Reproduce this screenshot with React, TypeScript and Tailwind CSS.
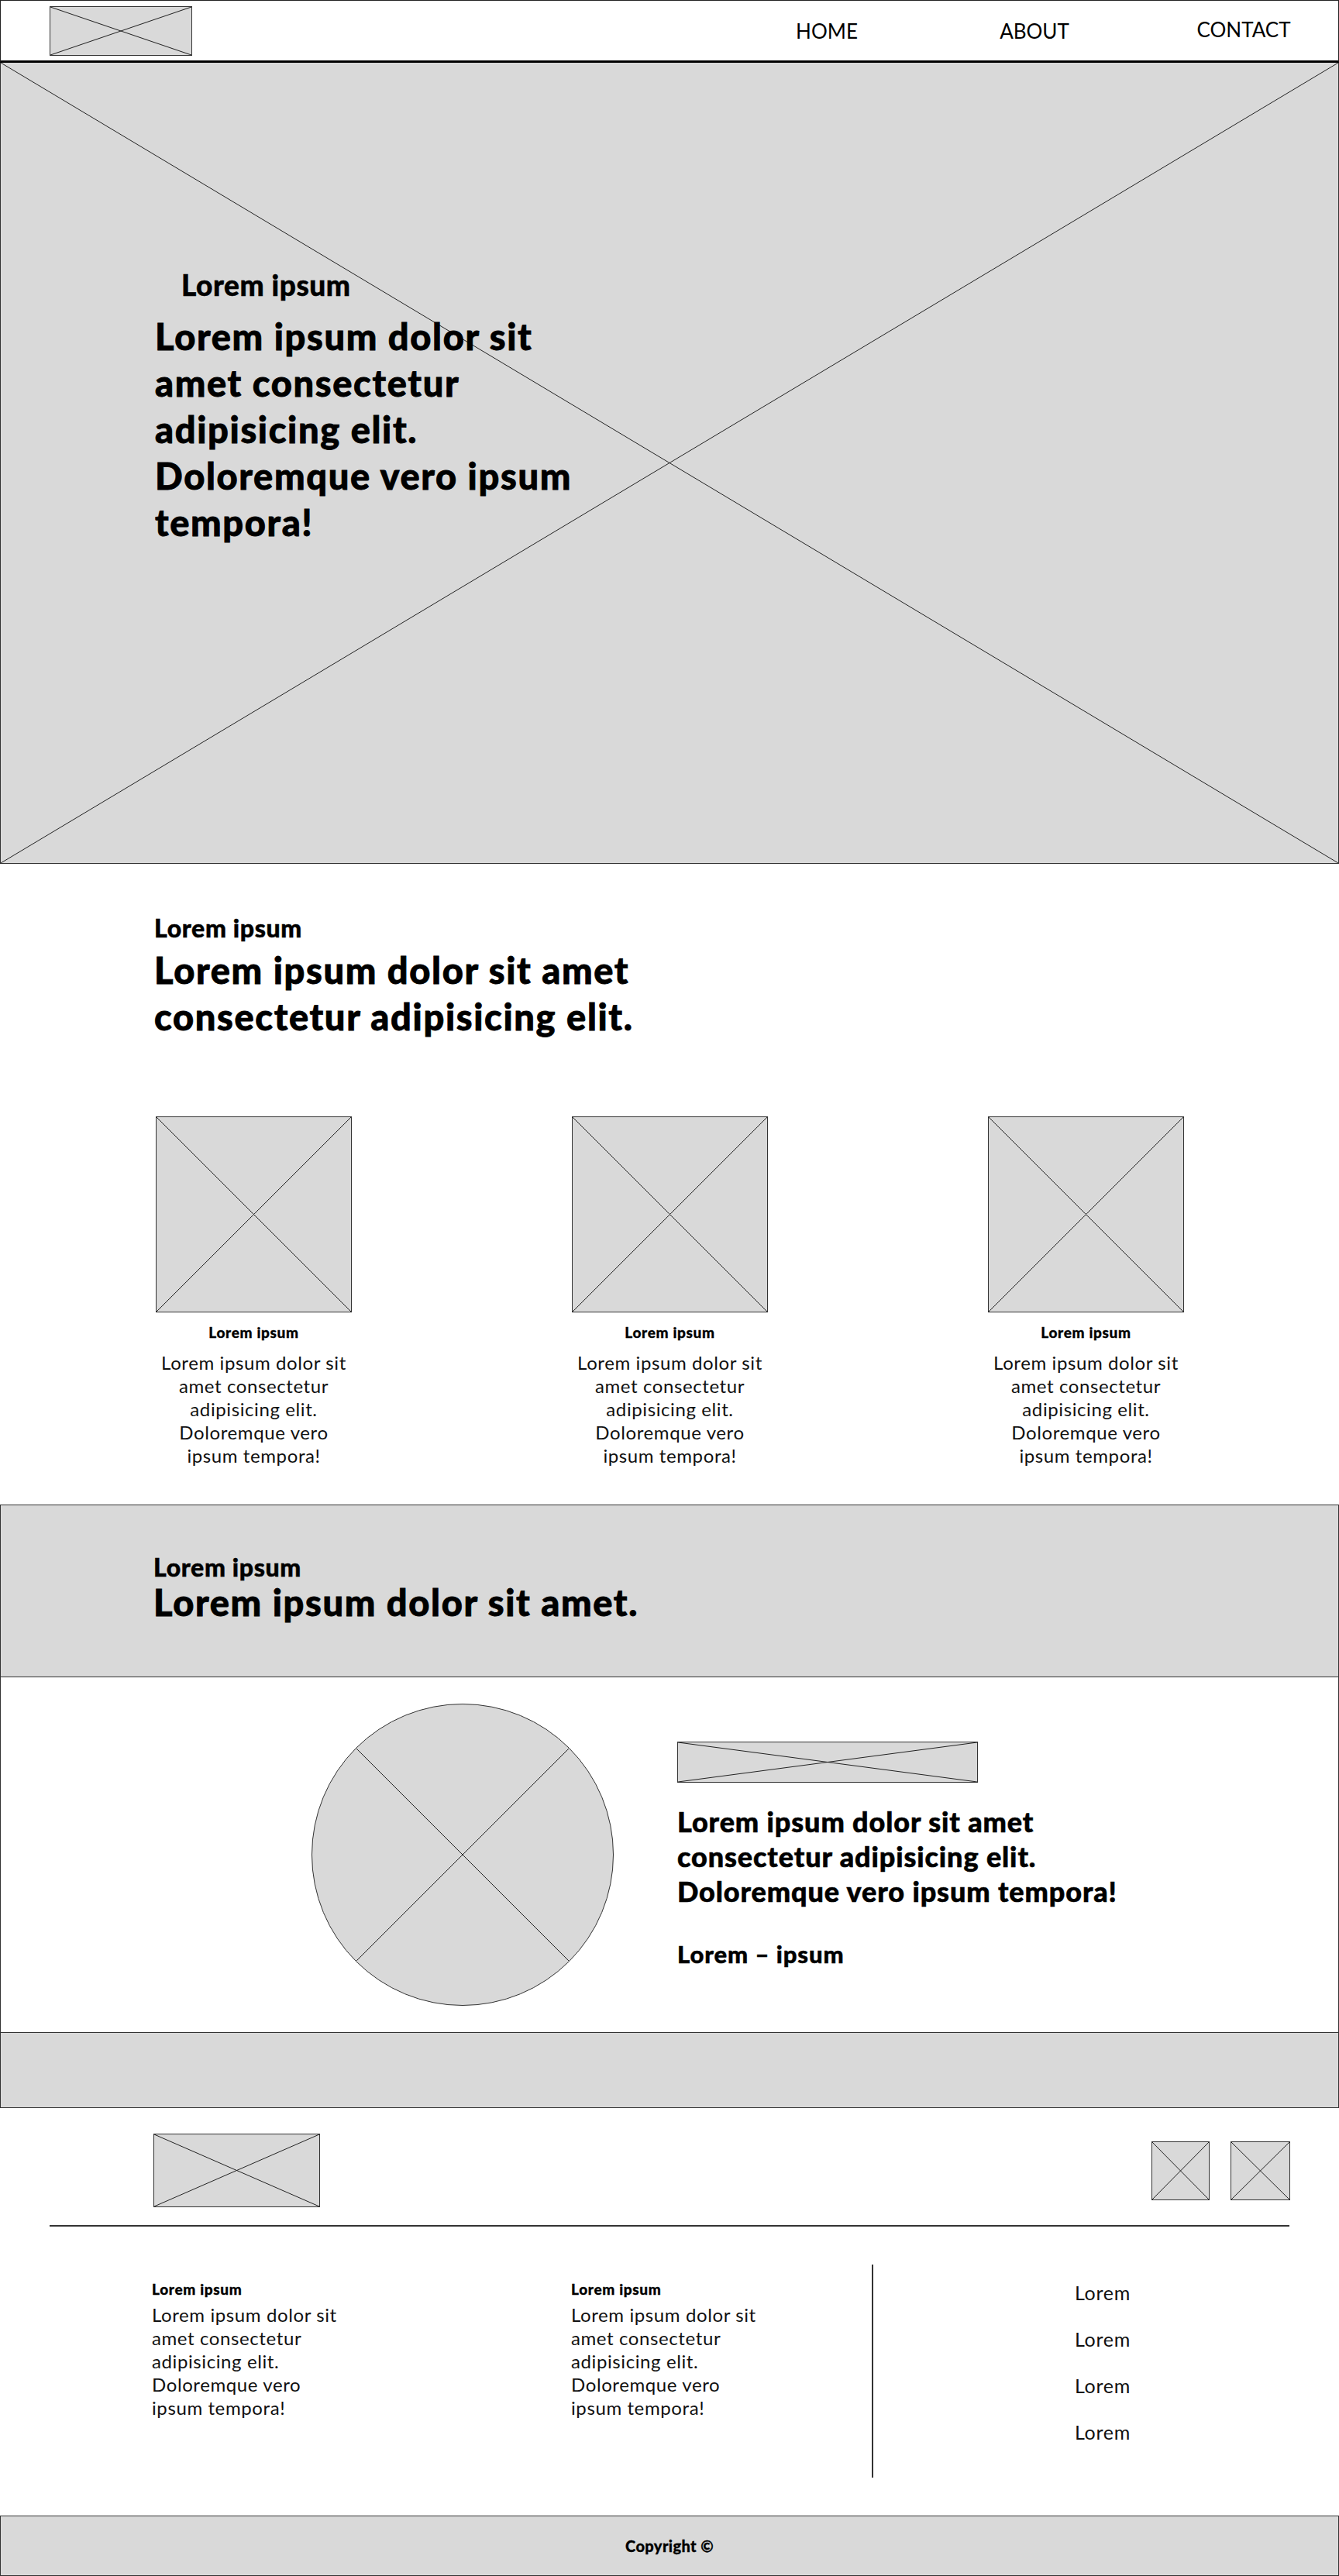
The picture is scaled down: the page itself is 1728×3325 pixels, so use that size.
import React from "react";

function XLines({ stroke = "#222" }: { stroke?: string }) {
  return (
    <svg
      className="absolute inset-0 w-full h-full"
      viewBox="0 0 100 100"
      preserveAspectRatio="none"
    >
      <line x1="0" y1="0" x2="100" y2="100" stroke={stroke} strokeWidth="1" vectorEffect="non-scaling-stroke" />
      <line x1="100" y1="0" x2="0" y2="100" stroke={stroke} strokeWidth="1" vectorEffect="non-scaling-stroke" />
    </svg>
  );
}

function Placeholder({ className }: { className: string }) {
  return (
    <div className={"relative bg-[#d9d9d9] border border-[#333] shrink-0 " + className}>
      <XLines />
    </div>
  );
}

const bodyText = (
  <>
    Lorem ipsum dolor sit
    <br />
    amet consectetur
    <br />
    adipisicing elit.
    <br />
    Doloremque vero
    <br />
    ipsum tempora!
  </>
);

function Card() {
  return (
    <div className="w-[537px] flex flex-col items-center">
      <Placeholder className="w-[253px] h-[253px]" />
      <div className="mt-[14px] text-[19px] leading-[24px] font-black tracking-[0.035em] [-webkit-text-stroke:0.3px_black]">Lorem ipsum</div>
      <p className="mt-[12px] text-[24px] leading-[30px] text-center text-[#111] tracking-[0.025em]">{bodyText}</p>
    </div>
  );
}

export default function App() {
  return (
    <div className="w-[1728px] bg-white text-black font-['Lato','Open_Sans',sans-serif]">
      {/* Header */}
      <header className="h-[81px] border border-[#222] border-b-[3px] border-b-black flex items-center pl-[63px]">
        <Placeholder className="w-[184px] h-[64px]" />
        <nav className="ml-auto flex items-center text-[26px] leading-[32px] font-normal">
          <a className="w-[268px] text-center">HOME</a>
          <a className="w-[268px] text-center mr-[14px]">ABOUT</a>
          <a className="w-[244px] text-center mb-[4px]">CONTACT</a>
        </nav>
      </header>

      {/* Hero */}
      <section className="relative h-[1034px] bg-[#d9d9d9] border-x border-b border-[#333]">
        <XLines />
        <div className="relative pl-[199px] pt-[265px]">
          <div className="ml-[34px] text-[37px] leading-[44px] font-black tracking-[0.015em] [-webkit-text-stroke:0.5px_black]">Lorem ipsum</div>
          <h1 className="mt-[14px] text-[47px] leading-[60px] font-black tracking-[0.035em] [-webkit-text-stroke:0.8px_black]">
            Lorem ipsum dolor sit
            <br />
            amet consectetur
            <br />
            adipisicing elit.
            <br />
            Doloremque vero ipsum
            <br />
            tempora!
          </h1>
        </div>
      </section>

      {/* Intro + cards */}
      <section className="h-[827px] pt-[63px]">
        <div className="pl-[199px]">
          <div className="text-[32px] leading-[40px] font-black tracking-[0.02em] [-webkit-text-stroke:0.5px_black]">Lorem ipsum</div>
          <h2 className="mt-[4px] text-[47px] leading-[60px] font-black tracking-[0.035em] [-webkit-text-stroke:0.8px_black]">
            Lorem ipsum dolor sit amet
            <br />
            consectetur adipisicing elit.
          </h2>
        </div>
        <div className="mt-[99px] flex pl-[59px]">
          <Card />
          <Card />
          <Card />
        </div>
      </section>

      {/* Gray band */}
      <section className="h-[223px] bg-[#d9d9d9] border border-[#333] pt-[61px] pl-[197px]">
        <div className="text-[32px] leading-[38px] font-black tracking-[0.02em] [-webkit-text-stroke:0.5px_black]">Lorem ipsum</div>
        <h2 className="text-[47px] leading-[52px] font-black tracking-[0.035em] [-webkit-text-stroke:0.8px_black]">Lorem ipsum dolor sit amet.</h2>
      </section>

      {/* Circle + quote */}
      <section className="h-[458px] border-x border-[#333] flex items-center pl-[401px]">
        <div className="relative w-[390px] h-[390px] rounded-full bg-[#d9d9d9] border border-[#333] shrink-0 overflow-hidden">
          <svg className="absolute inset-0 w-full h-full" viewBox="0 0 100 100">
            <line x1="14.64" y1="14.64" x2="85.36" y2="85.36" stroke="#222" strokeWidth="1" vectorEffect="non-scaling-stroke" />
            <line x1="85.36" y1="14.64" x2="14.64" y2="85.36" stroke="#222" strokeWidth="1" vectorEffect="non-scaling-stroke" />
          </svg>
        </div>
        <div className="ml-[82px] flex flex-col">
          <Placeholder className="w-[388px] h-[53px]" />
          <p className="mt-[28px] text-[36px] leading-[45px] font-black tracking-[0.025em] [-webkit-text-stroke:0.6px_black]">
            Lorem ipsum dolor sit amet
            <br />
            consectetur adipisicing elit.
            <br />
            Doloremque vero ipsum tempora!
          </p>
          <div className="mt-[40px] text-[31px] leading-[36px] font-black tracking-[0.03em] [-webkit-text-stroke:0.5px_black]">Lorem – ipsum</div>
        </div>
      </section>

      {/* Gray band 2 */}
      <section className="h-[98px] bg-[#d9d9d9] border border-[#333]" />

      {/* Footer */}
      <footer className="h-[526px] pt-[33px]">
        <div className="flex items-center pl-[198px] pr-[63px]">
          <Placeholder className="w-[215px] h-[95px]" />
          <div className="ml-auto flex gap-[27px]">
            <Placeholder className="w-[75px] h-[76px]" />
            <Placeholder className="w-[77px] h-[76px]" />
          </div>
        </div>
        <div className="mt-[23px] mx-[64px] h-[2px] bg-[#333]" />
        <div className="mt-[49px] flex h-[275px] pl-[196px]">
          <div className="w-[541px] pt-[20px]">
            <div className="text-[19px] leading-[24px] font-black tracking-[0.035em] [-webkit-text-stroke:0.3px_black]">Lorem ipsum</div>
            <p className="mt-[6px] text-[24px] leading-[30px] text-[#111] tracking-[0.025em]">{bodyText}</p>
          </div>
          <div className="w-[388px] pt-[20px]">
            <div className="text-[19px] leading-[24px] font-black tracking-[0.035em] [-webkit-text-stroke:0.3px_black]">Lorem ipsum</div>
            <p className="mt-[6px] text-[24px] leading-[30px] text-[#111] tracking-[0.025em]">{bodyText}</p>
          </div>
          <div className="w-[2px] h-[275px] bg-[#333]" />
          <ul className="w-[592px] pt-[6px] flex flex-col items-center text-[25px] leading-[60px] text-[#111] tracking-[0.03em]">
            <li>Lorem</li>
            <li>Lorem</li>
            <li>Lorem</li>
            <li>Lorem</li>
          </ul>
        </div>
      </footer>

      {/* Copyright bar */}
      <div className="h-[78px] bg-[#d9d9d9] border border-[#333] flex items-center justify-center">
        <span className="text-[20px] font-black tracking-[0.02em] [-webkit-text-stroke:0.3px_black]">Copyright ©</span>
      </div>
    </div>
  );
}
